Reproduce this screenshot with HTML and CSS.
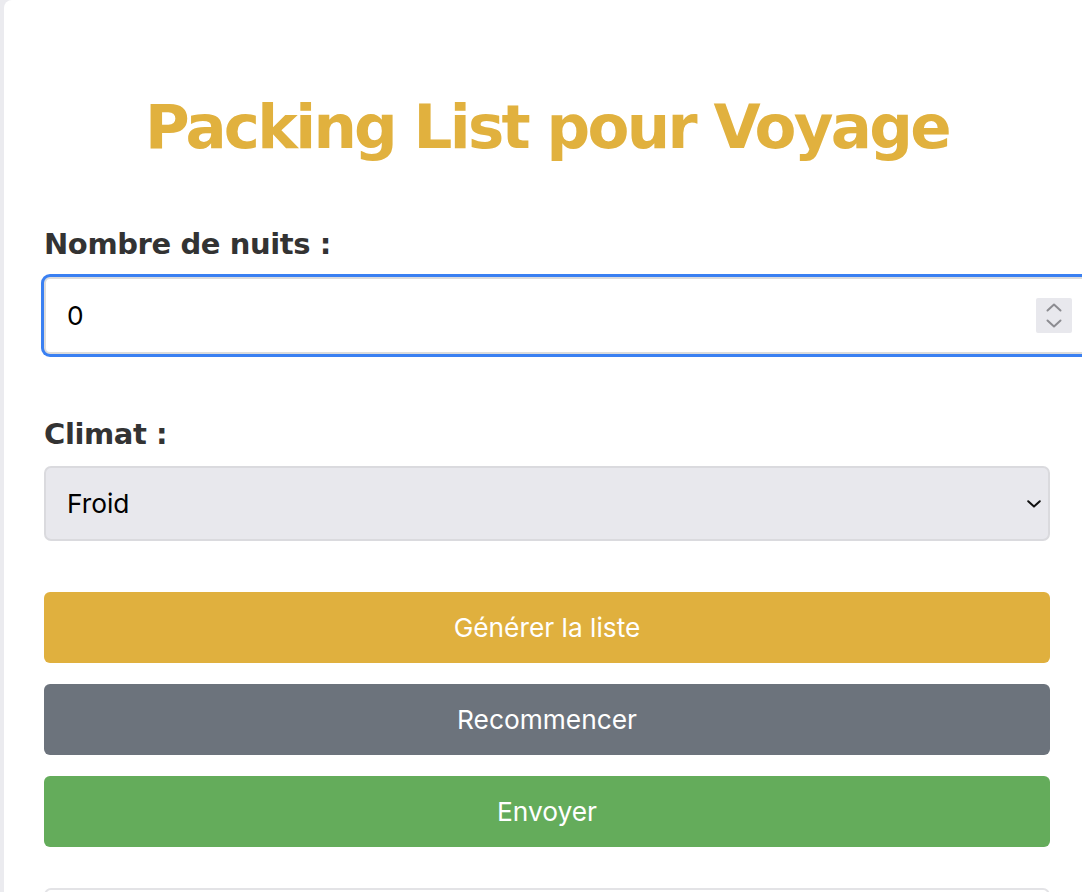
FILE: index.html
```html
<!DOCTYPE html>
<html lang="fr">
<head>
<meta charset="utf-8">
<title>Packing List pour Voyage</title>
<link rel="stylesheet" href="styles.css">
</head>
<body>
<main class="card">
  <h1 class="title">Packing List pour Voyage</h1>

  <div class="group">
    <label class="label" for="nuits">Nombre de nuits :</label>
    <div class="field">
      <input id="nuits" class="input input-focus" type="number" value="0">
      <span class="spinner" aria-hidden="true">
        <svg width="36" height="35" viewBox="0 0 36 35">
          <polyline points="11.5,12.5 18,6.5 24.5,12.5" fill="none" stroke="#8c8c91" stroke-width="2" stroke-linecap="round" stroke-linejoin="round"/>
          <polyline points="11.5,22.5 18,28.5 24.5,22.5" fill="none" stroke="#8c8c91" stroke-width="2" stroke-linecap="round" stroke-linejoin="round"/>
        </svg>
      </span>
    </div>
  </div>

  <div class="group group-climat">
    <label class="label" for="climat">Climat :</label>
    <div class="field">
      <select id="climat" class="select">
        <option>Froid</option>
        <option>Tempéré</option>
        <option>Chaud</option>
      </select>
      <svg class="chevron" width="14" height="8" viewBox="0 0 14 8" aria-hidden="true">
        <polyline points="1.2,1.2 7,6.6 12.8,1.2" fill="none" stroke="#111" stroke-width="2" stroke-linecap="round" stroke-linejoin="round"/>
      </svg>
    </div>
  </div>

  <div class="actions">
    <button class="btn btn-gold" type="button">Générer la liste</button>
    <button class="btn btn-grey" type="button">Recommencer</button>
    <button class="btn btn-green" type="button">Envoyer</button>
  </div>

  <div class="result"></div>
</main>
</body>
</html>
```

FILE: styles.css
```css
html, body {
  margin: 0;
  padding: 0;
  overflow: hidden;
}

body {
  background: #ebebef;
  font-family: "DejaVu Sans", sans-serif;
}

.card {
  margin-left: 4px;
  width: 1006px;
  min-height: 100vh;
  padding: 92px 40px 0 40px;
  background: #ffffff;
  border-top-left-radius: 8px;
}

.title {
  margin: 0 0 65px 0;
  font-family: "DejaVu Sans", sans-serif;
  font-weight: bold;
  font-size: 61px;
  line-height: 70px;
  letter-spacing: -2.7px;
  color: #e1b13e;
  text-align: center;
}

.group {
  display: flex;
  flex-direction: column;
  gap: 16px;
}

.group-climat {
  margin-top: 63px;
  gap: 15px;
}

.label {
  font-family: "DejaVu Sans", sans-serif;
  font-weight: bold;
  font-size: 29px;
  line-height: 34px;
  letter-spacing: -0.4px;
  color: #333333;
}

.field {
  position: relative;
  width: 100%;
}

.input {
  display: block;
  width: 100%;
  height: 73px;
  margin: 0;
  padding: 0 22px 0 21px;
  border: 2px solid #dcdcdc;
  border-radius: 6px;
  background: #ffffff;
  font-family: "Inter", sans-serif;
  font-size: 26.3px;
  color: #000;
  outline: none;
  -moz-appearance: textfield;
}

.input::-webkit-inner-spin-button,
.input::-webkit-outer-spin-button {
  -webkit-appearance: none;
  margin: 0;
}

.input-focus {
  box-shadow: 0 0 0 3px #3a80f2;
}

.spinner {
  position: absolute;
  right: -22px;
  top: 21px;
  width: 36px;
  height: 35px;
  background: #e8e8ed;
  border-radius: 2px;
  display: block;
}

.spinner svg {
  display: block;
}

.select {
  display: block;
  width: 100%;
  height: 75px;
  margin: 0;
  padding: 0 22px 0 21px;
  box-sizing: border-box;
  border: 2px solid #dadade;
  border-radius: 7px;
  background: #e8e8ed;
  font-family: "Inter", sans-serif;
  font-size: 26.3px;
  color: #000;
  -webkit-appearance: none;
  appearance: none;
  outline: none;
}

.chevron {
  position: absolute;
  right: 9px;
  top: 34px;
  pointer-events: none;
}

.actions {
  margin-top: 51px;
  display: flex;
  flex-direction: column;
  gap: 21px;
}

.btn {
  display: flex;
  align-items: center;
  justify-content: center;
  width: 100%;
  height: 71px;
  margin: 0;
  padding: 0;
  border: none;
  border-radius: 6px;
  font-family: "Inter", sans-serif;
  font-size: 26.3px;
  color: #ffffff;
  cursor: pointer;
}

.btn-gold { background: #e0b03e; }
.btn-grey { background: #6c737c; }
.btn-green { background: #64ac5b; }

.result {
  margin-top: 41px;
  height: 120px;
  border: 2px solid #e3e3e6;
  border-radius: 7px;
  box-sizing: border-box;
}
```
